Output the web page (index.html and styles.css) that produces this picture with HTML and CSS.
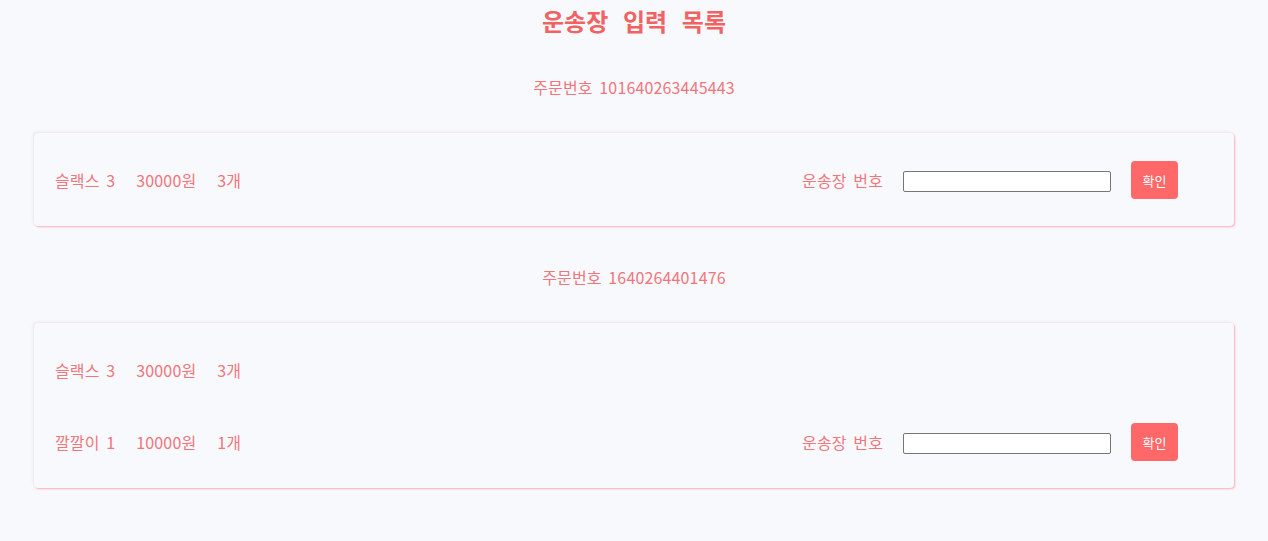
FILE: index.html
```html
<!DOCTYPE html>
<html lang="ko">
<head>
<meta charset="utf-8">
<title>운송장 입력 목록</title>
<link rel="stylesheet" href="styles.css">
</head>
<body>
<h1 class="page-title">운송장 입력 목록</h1>

<section class="order">
  <div class="order-no">주문번호 101640263445443</div>
  <div class="order-card">
    <div class="item-row">
      <div class="item-info"><span>슬랙스 3</span><span>30000원</span><span>3개</span></div>
      <div class="invoice">
        <label class="invoice-label">운송장 번호</label>
        <input class="invoice-input" type="text">
        <button class="confirm-btn">확인</button>
      </div>
    </div>
  </div>
</section>

<section class="order">
  <div class="order-no">주문번호 1640264401476</div>
  <div class="order-card">
    <div class="item-row">
      <div class="item-info"><span>슬랙스 3</span><span>30000원</span><span>3개</span></div>
    </div>
    <div class="item-row">
      <div class="item-info"><span>깔깔이 1</span><span>10000원</span><span>1개</span></div>
      <div class="invoice">
        <label class="invoice-label">운송장 번호</label>
        <input class="invoice-input" type="text">
        <button class="confirm-btn">확인</button>
      </div>
    </div>
  </div>
</section>
</body>
</html>
```

FILE: styles.css
```css
* { box-sizing: border-box; }

body {
  margin: 0;
  background: #f8f9fc;
  font-family: "Noto Sans CJK KR", "Noto Sans", sans-serif;
  color: #f0767c;
  font-size: 16px;
  word-spacing: 2px;
  letter-spacing: 0.15px;
}

.page-title {
  margin: 0;
  height: 41px;
  line-height: 41px;
  text-align: center;
  font-size: 24px;
  font-weight: 700;
  color: #f26262;
  letter-spacing: 0;
  word-spacing: 8px;
}

.order-no {
  padding: 34px 0;
  line-height: 24px;
  text-align: center;
}

.order-card {
  width: 1200px;
  margin: 0 auto 5px;
  padding: 11px 56px 10px 21px;
  background: #f8f9fd;
  border-radius: 4px;
  box-shadow: 1px 1px 2px rgba(255, 150, 165, 0.75), -1px -1px 3px rgba(220, 200, 210, 0.35);
}

.item-row {
  height: 72px;
  display: flex;
  align-items: center;
  justify-content: space-between;
}

.item-info {
  display: flex;
  gap: 21px;
}

.invoice {
  display: flex;
  align-items: center;
  gap: 20px;
}

.invoice-label {
  color: #f0767c;
}

.invoice-input {
  width: 208px;
  height: 21px;
  border: 1px solid #767676;
  border-radius: 2px;
  background: #fff;
  margin: 2px 0 0;
  padding: 0 2px;
}

.confirm-btn {
  width: 47px;
  height: 38px;
  border: none;
  border-radius: 4px;
  background: #ff6868;
  color: #fff;
  font-family: inherit;
  font-size: 13px;
  letter-spacing: 0;
  word-spacing: 0;
  padding: 0;
}
```
